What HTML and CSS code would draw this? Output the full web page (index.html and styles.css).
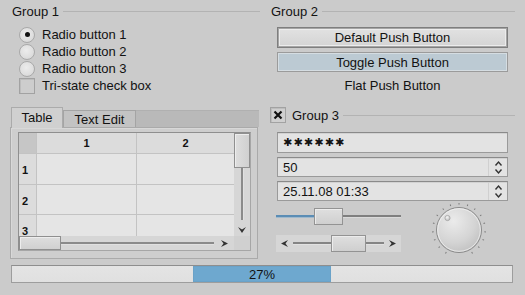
FILE: index.html
```html
<!DOCTYPE html>
<html>
<head>
<meta charset="utf-8">
<link rel="stylesheet" href="styles.css">
</head>
<body>
<div class="window">
  <section class="group g1">
    <div class="gtitle"><span>Group 1</span><i class="gline"></i></div>
    <div class="opts">
      <div class="opt"><span class="radio checked"></span>Radio button 1</div>
      <div class="opt"><span class="radio"></span>Radio button 2</div>
      <div class="opt"><span class="radio"></span>Radio button 3</div>
      <div class="opt"><span class="check"></span>Tri-state check box</div>
    </div>
  </section>

  <section class="group g2">
    <div class="gtitle"><span>Group 2</span><i class="gline"></i></div>
    <div class="buttons">
      <div class="btn default">Default Push Button</div>
      <div class="btn toggle">Toggle Push Button</div>
      <div class="btn flat">Flat Push Button</div>
    </div>
  </section>

  <section class="tabs">
    <div class="tabbar">
      <div class="tab sel">Table</div>
      <div class="tab">Text Edit</div>
      <div class="tabfill"></div>
    </div>
    <div class="pane">
      <div class="tframe">
        <div class="viewport">
          <div class="tgrid">
            <div class="corner"></div><div class="ch">1</div><div class="ch">2</div>
            <div class="rh">1</div><div class="cell"></div><div class="cell"></div>
            <div class="rh">2</div><div class="cell"></div><div class="cell"></div>
            <div class="rh">3</div><div class="cell"></div><div class="cell"></div>
          </div>
        </div>
        <div class="vscroll">
          <div class="vhandle"></div>
          <div class="vgroove"></div>
          <svg class="varrow" width="10" height="8" viewBox="0 0 10 8"><path d="M1 1 L5 7 L9 1 L5 3.5 Z" fill="#333"/></svg>
        </div>
        <div class="hscroll">
          <div class="hhandle"></div>
          <div class="hgroove"></div>
          <svg class="harrow" width="9" height="9" viewBox="0 0 9 9"><path d="M1 1 L8 4.5 L1 8 L3.5 4.5 Z" fill="#333"/></svg>
        </div>
        <div class="sccorner"></div>
      </div>
    </div>
  </section>

  <section class="group g3">
    <div class="gtitle">
      <span class="check x"><svg width="14" height="14" viewBox="0 0 14 14"><path d="M3.5 3.5 L10.5 10.5 M10.5 3.5 L3.5 10.5" stroke="#111" stroke-width="2.2"/></svg></span>
      <span>Group 3</span><i class="gline"></i>
    </div>
    <div class="fields">
      <div class="field pw">✱✱✱✱✱✱</div>
      <div class="field spin"><span class="val">50</span><span class="arrows"><svg width="9" height="15" viewBox="0 0 9 15"><path d="M1.5 5.5 L4.5 2 L7.5 5.5 M1.5 9.5 L4.5 13 L7.5 9.5" stroke="#333" stroke-width="1.4" fill="none"/></svg></span></div>
      <div class="field spin"><span class="val">25.11.08 01:33</span><span class="arrows"><svg width="9" height="15" viewBox="0 0 9 15"><path d="M1.5 5.5 L4.5 2 L7.5 5.5 M1.5 9.5 L4.5 13 L7.5 9.5" stroke="#333" stroke-width="1.4" fill="none"/></svg></span></div>
    </div>
    <div class="lower">
      <div class="sliders">
        <div class="slider">
          <div class="sgroove-l"></div>
          <div class="shandle"></div>
          <div class="sgroove-r"></div>
        </div>
        <div class="sbar">
          <svg width="10" height="9" viewBox="0 0 10 9"><path d="M9 1 L2 4.5 L9 8 L6.5 4.5 Z" fill="#333"/></svg>
          <div class="sbline s1"></div>
          <div class="sbhandle"></div>
          <div class="sbline s2"></div>
          <svg width="10" height="9" viewBox="0 0 10 9"><path d="M1 1 L8 4.5 L1 8 L3.5 4.5 Z" fill="#333"/></svg>
        </div>
      </div>
      <div class="dialbox">
        <svg class="dial" width="60" height="60" viewBox="0 0 60 60">
          <defs>
            <radialGradient id="dg" cx="0.38" cy="0.3" r="0.8">
              <stop offset="0" stop-color="#ebebeb"/>
              <stop offset="0.6" stop-color="#d4d4d4"/>
              <stop offset="1" stop-color="#bdbdbd"/>
            </radialGradient>
            <radialGradient id="pg" cx="0.4" cy="0.35" r="0.7">
              <stop offset="0" stop-color="#f6f6f6"/>
              <stop offset="1" stop-color="#bcbcbc"/>
            </radialGradient>
          </defs>
          <g stroke="#7a7a7a" stroke-width="1">
            <line x1="30" y1="3" x2="30" y2="4.6" transform="rotate(-150 30 30)"/>
            <line x1="30" y1="3" x2="30" y2="4.6" transform="rotate(-131 30 30)"/>
            <line x1="30" y1="3" x2="30" y2="4.6" transform="rotate(-112 30 30)"/>
            <line x1="30" y1="3" x2="30" y2="4.6" transform="rotate(-94 30 30)"/>
            <line x1="30" y1="3" x2="30" y2="4.6" transform="rotate(-75 30 30)"/>
            <line x1="30" y1="3" x2="30" y2="4.6" transform="rotate(-56 30 30)"/>
            <line x1="30" y1="3" x2="30" y2="4.6" transform="rotate(-37 30 30)"/>
            <line x1="30" y1="3" x2="30" y2="4.6" transform="rotate(-19 30 30)"/>
            <line x1="30" y1="3" x2="30" y2="4.6" transform="rotate(0 30 30)"/>
            <line x1="30" y1="3" x2="30" y2="4.6" transform="rotate(19 30 30)"/>
            <line x1="30" y1="3" x2="30" y2="4.6" transform="rotate(37 30 30)"/>
            <line x1="30" y1="3" x2="30" y2="4.6" transform="rotate(56 30 30)"/>
            <line x1="30" y1="3" x2="30" y2="4.6" transform="rotate(75 30 30)"/>
            <line x1="30" y1="3" x2="30" y2="4.6" transform="rotate(94 30 30)"/>
            <line x1="30" y1="3" x2="30" y2="4.6" transform="rotate(112 30 30)"/>
            <line x1="30" y1="3" x2="30" y2="4.6" transform="rotate(131 30 30)"/>
            <line x1="30" y1="3" x2="30" y2="4.6" transform="rotate(150 30 30)"/>
          </g>
          <circle cx="30" cy="30" r="22.5" fill="url(#dg)" stroke="#8a8a8a" stroke-width="1"/>
          <circle cx="30" cy="30" r="21.3" fill="none" stroke="#f4f4f4" stroke-width="0.9" opacity="0.8"/>
          <circle cx="18.5" cy="18" r="2.6" fill="url(#pg)" stroke="#9c9c9c" stroke-width="0.7"/>
        </svg>
      </div>
    </div>
  </section>

  <div class="progress">
    <div class="pspacer"></div>
    <div class="chunk"></div>
    <span class="ptext">27%</span>
  </div>
</div>
</body>
</html>
```

FILE: styles.css
```css
* { box-sizing: border-box; margin: 0; padding: 0; }
html, body { width: 525px; height: 295px; overflow: hidden; }
body {
  background: #cbcbcb;
  font: 13px/15px "Liberation Sans", Arial, sans-serif;
  color: #121212;
}
.window {
  display: grid;
  grid-template-columns: 250px 245px;
  grid-template-rows: 103px 152px auto;
  column-gap: 10px;
  padding: 4px 10px 0 10px;
}

/* group boxes */
.gtitle { display: flex; align-items: center; height: 15px; gap: 4px; }
.g1 .gtitle { padding-left: 2px; }
.g2 .gtitle { padding-left: 1px; }
.gline { flex: 1; height: 1px; background: #b3b3b3; }

.opts { margin-top: 7px; padding-left: 9px; }
.opt { display: flex; align-items: center; height: 17px; gap: 7px; }
.radio {
  width: 16px; height: 16px; border-radius: 50%;
  border: 1px solid #a9a9a9;
  background: radial-gradient(circle at 45% 40%, #ececec 0%, #dedede 60%, #cfcfcf 100%);
  display: flex; align-items: center; justify-content: center;
}
.radio.checked::after {
  content: ""; width: 5px; height: 5px; border-radius: 50%; background: #111;
}
.check {
  width: 16px; height: 16px;
  border: 1px solid #a2a2a2;
  background: #cdcdcd;
  box-shadow: inset 1px 1px 0 #bdbdbd;
  display: flex; align-items: center; justify-content: center;
}

.buttons {
  margin: 8px 0 0 7px; width: 231px;
  display: flex; flex-direction: column; gap: 4px;
}
.btn { height: 20px; display: flex; align-items: center; justify-content: center; }
.btn.default {
  height: 21px;
  border: 1px solid #7e7e7e;
  box-shadow: inset 0 0 0 1px #a5a5a5, inset 0 0 0 2px #ececec;
  background: linear-gradient(#e2e2e2, #d3d3d3);
}
.btn.toggle {
  border: 1px solid #9b9b9b;
  box-shadow: inset 0 0 0 1px #d5dde2;
  background: #bccad3;
}
.btn.flat { height: 19px; }

/* tabs */
.tabs { display: flex; flex-direction: column; }
.tabbar { display: flex; align-items: flex-end; height: 20px; position: relative; z-index: 1; }
.tab {
  height: 17px; width: 73px;
  border: 1px solid #a4a4a4; border-bottom: none;
  background: #c3c3c3;
  display: flex; align-items: center; justify-content: center;
  padding-top: 1px;
}
.tab.sel {
  width: 52px; height: 21px; margin-left: 1px;
  background: #d0d0d0;
  border-color: #ababab;
  margin-bottom: -1px;
  padding-top: 0; padding-bottom: 1px;
}
.tabfill { flex: 1; height: 17px; background: #b9b9b9; margin-right: 1px; border-top: 1px solid #b0b0b0; }
.pane {
  width: 248px; height: 132px;
  border: 1px solid #aaaaaa;
  box-shadow: inset 1px 1px 0 #d8d8d8;
  background: #cecece;
  padding: 4px 0 0 7px;
}
.tframe {
  width: 233px; height: 119px;
  border: 1px solid #8f8f8f;
  border-right-color: #a6a6a6; border-bottom-color: #a6a6a6;
  display: grid;
  grid-template-columns: 1fr 16px;
  grid-template-rows: 1fr 14px;
  background: #d6d6d6;
}
.viewport { overflow: hidden; background: #c4c4c4; }
.tgrid {
  display: grid;
  grid-template-columns: 17px 99px 97px;
  grid-template-rows: 20px 30px 29px 30px;
  gap: 1px;
  background: #c3c3c3;
  font: bold 11px/13px "Liberation Sans", Arial, sans-serif;
}
.corner { background: #c6c6c6; }
.ch { background: #dcdcdc; display: flex; align-items: center; justify-content: center; }
.rh { background: #dcdcdc; display: flex; align-items: center; padding-left: 3px; padding-top: 3px; }
.cell { background: #e5e5e5; }

.vscroll { background: #d6d6d6; display: flex; flex-direction: column; align-items: center; }
.vhandle {
  width: 16px; height: 35px;
  border: 1px solid #8f8f8f;
  background: linear-gradient(90deg, #dedede, #d0d0d0);
  box-shadow: inset 1px 1px 0 #ededed;
}
.vgroove { width: 2px; height: 52px; background: #8a8a8a; border-right: 1px solid #e0e0e0; box-sizing: content-box; }
.varrow { margin-top: 6px; }

.hscroll { background: #d6d6d6; display: flex; align-items: center; }
.hhandle {
  width: 42px; height: 14px;
  border: 1px solid #8f8f8f;
  background: linear-gradient(#dedede, #d0d0d0);
  box-shadow: inset 1px 1px 0 #ededed;
}
.hgroove { width: 153px; height: 2px; background: #8a8a8a; border-bottom: 1px solid #e0e0e0; box-sizing: content-box; }
.harrow { margin-left: 6px; }
.sccorner { background: #d0d0d0; }

/* group 3 */
.g3 .gtitle { height: 16px; gap: 0; }
.g3 .gtitle .check { width: 16px; height: 16px; background: #cfcfcf; margin-right: 6px; }
.g3 .gline { margin-left: 4px; }
.fields {
  margin: 9px 0 0 7px; width: 231px;
  display: flex; flex-direction: column; gap: 4px;
}
.field {
  height: 20px;
  border: 1px solid #9a9a9a;
  border-top-color: #8a8a8a;
  background: #e3e3e3;
  box-shadow: inset 0 1px 0 #d2d2d2;
  display: flex; align-items: center;
  padding-left: 5px;
}
.field.pw { height: 21px; font: 11px/13px "DejaVu Sans", sans-serif; letter-spacing: 1.2px; padding-left: 5px; }
.field.spin { padding-right: 0; }
.val { flex: 1; }
.arrows {
  width: 19px; height: 100%;
  border-left: 1px solid #d0d0d0;
  display: flex; align-items: center; justify-content: center;
}

.lower { display: flex; margin-top: 7px; }
.sliders { width: 125px; margin-left: 6px; display: flex; flex-direction: column; gap: 10px; }
.slider { height: 17px; display: flex; align-items: center; }
.sgroove-l { width: 38px; height: 2px; background: #5b8db5; border-bottom: 1px solid #9fb9cd; box-sizing: content-box; }
.shandle {
  width: 29px; height: 17px;
  border: 1px solid #939393;
  background: linear-gradient(#dfdfdf, #cfcfcf);
  box-shadow: inset 1px 1px 0 #ececec;
}
.sgroove-r { flex: 1; height: 2px; background: #7f7f7f; border-bottom: 1px solid #dadada; box-sizing: content-box; }
.sbar {
  height: 17px; background: #d6d6d6;
  display: flex; align-items: center; padding: 0 3px;
}
.sbline { height: 2px; background: #858585; border-bottom: 1px solid #e2e2e2; box-sizing: content-box; }
.sbline.s1 { width: 38px; margin-left: 4px; }
.sbline.s2 { flex: 1; margin-right: 4px; }
.sbhandle {
  width: 35px; height: 17px;
  border: 1px solid #939393;
  background: linear-gradient(#dfdfdf, #cfcfcf);
  box-shadow: inset 1px 1px 0 #ececec;
}
.dialbox { flex: 1; display: flex; justify-content: center; }
.dial { margin-top: -8px; margin-left: 1px; }

/* progress */
.progress {
  grid-column: 1 / -1;
  margin: 6px 0 0 1px;
  width: 502px; height: 18px;
  border: 1px solid #9d9d9d;
  border-top-color: #8e8e8e;
  background: linear-gradient(#e4e4e4, #e0e0e0);
  display: flex;
  position: relative;
}
.pspacer { width: 181px; }
.chunk {
  width: 138px; height: 100%;
  background: #6ea8cf;
  box-shadow: inset 0 0 0 1px #6aa2c8;
}
.ptext {
  position: absolute; inset: 0;
  display: flex; align-items: center; justify-content: center;
  font-size: 13px;
}
```
